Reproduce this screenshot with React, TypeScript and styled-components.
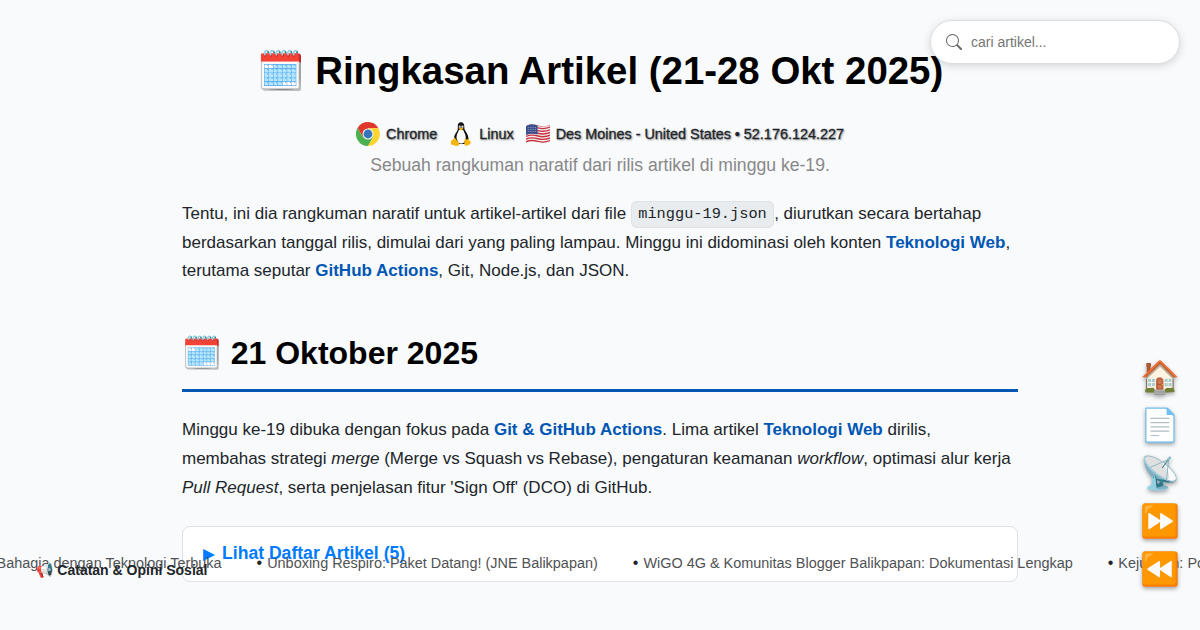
import React from "react";
import styled, { createGlobalStyle } from "styled-components";

const sans = `"Liberation Sans", Arial, "Noto Color Emoji", sans-serif`;

const GlobalStyle = createGlobalStyle`
  * { box-sizing: border-box; }
  html, body { margin: 0; height: 630px; overflow: hidden; }
  body {
    background: #f8fafc;
    color: #212529;
    font-family: ${sans};
    font-size: 17px;
    line-height: 28.8px;
  }
`;

const Page = styled.div`
  position: relative;
  width: 1200px;
  height: 630px;
  overflow: hidden;
`;

const Main = styled.main`
  width: 836px;
  margin: 0 auto;
  padding-top: 40px;
`;

const Header = styled.header`
  display: flex;
  flex-direction: column;
  align-items: center;
`;

const Title = styled.h1`
  margin: 0;
  font-size: 38.4px;
  line-height: 62px;
  color: #000;
  white-space: nowrap;
`;

const TitleIcon = styled.span`
  margin: 0 -1px 0 1px;
`;

const Visitor = styled.div`
  display: flex;
  align-items: center;
  gap: 12px;
  height: 32px;
  margin-top: 16px;
  font-size: 14.4px;
  color: #212529;
  white-space: nowrap;
  text-shadow: 1px 1px 2px rgba(0, 0, 0, 0.5);
`;

const VisitorItem = styled.span`
  display: flex;
  align-items: center;
  gap: 6px;
  -webkit-text-stroke: 0.3px currentColor;
`;

const Subtitle = styled.p`
  margin: 0;
  font-size: 17.6px;
  line-height: 30px;
  color: #888;
`;

const Paragraph = styled.p<{ $top: number }>`
  margin: ${(p) => p.$top}px 0 0;
`;

const Strong = styled.strong`
  color: #0056b3;
`;

const Code = styled.code`
  padding: 3px 6.4px 4.6px;
  border: 1px solid #dee2e6;
  border-radius: 6px;
  background: #e9ecef;
  font-family: "Liberation Mono", monospace;
  font-size: 15.3px;
  line-height: 1;
  vertical-align: 1.2px;
`;

const Heading = styled.h2`
  margin: 40px 0 0;
  padding-bottom: 9px;
  border-bottom: 3px solid #0056b3;
  font-size: 32px;
  line-height: 54px;
  color: #000;
`;

const Details = styled.section`
  height: 56px;
  margin-top: 23.2px;
  padding: 12px 20px;
  border: 1px solid #dee2e6;
  border-radius: 8px;
  background: #fff;
`;

const Summary = styled.div`
  display: flex;
  align-items: flex-start;
  gap: 7px;
  color: #007bff;
  font-size: 17.6px;
  font-weight: bold;
`;

const Marker = styled.span`
  width: 12px;
  padding-top: 1px;
  font-family: "DejaVu Sans", sans-serif;
  font-size: 15.5px;
  font-weight: normal;
`;

const SearchBox = styled.label`
  position: absolute;
  top: 20px;
  right: 20px;
  display: flex;
  align-items: center;
  gap: 9px;
  width: 250px;
  height: 44px;
  padding: 0 15px;
  border: 1px solid #dcdfe2;
  border-radius: 22px;
  background: #fff;
  box-shadow: 0 2px 8px rgba(0, 0, 0, 0.15);
  svg { flex: none; }
`;

const SearchInput = styled.input`
  width: 100%;
  padding: 0;
  border: 0;
  outline: 0;
  background: transparent;
  font: 14px ${sans};
  &::placeholder { color: #757575; }
`;

const SideNav = styled.nav`
  position: absolute;
  top: 353px;
  right: 20px;
  display: flex;
  flex-direction: column;
`;

const SideButton = styled.a`
  display: flex;
  align-items: center;
  justify-content: center;
  width: 40px;
  height: 48px;
  font-size: 32px;
  line-height: 48px;
  filter: drop-shadow(0 2px 2px rgba(0, 0, 0, 0.35));
`;

const Ticker = styled.div`
  position: absolute;
  left: -3.5px;
  top: 549px;
  display: flex;
  gap: 35px;
  font-size: 14.44px;
  line-height: 28px;
  color: #505254;
  white-space: nowrap;
`;

const TickerItem = styled.span`
  display: flex;
  gap: 5px;
`;

const Bullet = styled.span`
  color: #212529;
  font-size: 16px;
`;

const Category = styled.div`
  position: absolute;
  left: 36px;
  top: 556px;
  font-size: 14px;
  font-weight: bold;
  line-height: 28px;
  white-space: nowrap;
`;

const ChromeLogo = () => (
  <svg width="24" height="24" viewBox="0 0 48 48">
    <path d="M3.2 12A24 24 0 0 1 44.8 12.500H24V24L13.600 30Z" fill="#e0382c" />
    <path d="M3.2 12 13.600 30 24 24 34.400 30 24 48A24 24 0 0 1 3.200 12Z" fill="#4caf50" />
    <path d="M44.8 12.500H24V24L34.400 30 24 48A24 24 0 0 0 44.800 12.500Z" fill="#fdd32e" />
    <circle cx="24" cy="24" r="11" fill="#f1f1f1" />
    <circle cx="24" cy="24" r="8.8" fill="#3474b8" />
  </svg>
);

const LinuxLogo = () => (
  <svg width="24" height="24" viewBox="0 0 24 24">
    <path d="M12 .2C9.6.2 8.6 2 8.8 4.4c.1 2.200.2 3.200-1 5C6.200 11.500 5 14 5 16.500L8 22h8l3.500-5c0-3-1.200-5.500-2.700-7.600C15.400 7.500 15.300 6.600 15.300 4.500 15.300 1.800 14.200.2 12 .2Z" fill="#111" />
    <path d="M10 8c-1.500 3-2.800 5.500-2.400 8.500L9.500 21c2 .8 4.200.6 5.800-.8l1.500-4.200c0-3-1.500-5.500-2.600-8Z" fill="#fff" />
    <ellipse cx="10.700" cy="4.800" rx="1" ry="1.400" fill="#fff" />
    <ellipse cx="13.400" cy="4.800" rx="1.100" ry="1.400" fill="#fff" />
    <circle cx="10.900" cy="5" r=".5" />
    <circle cx="13.200" cy="5" r=".5" />
    <path d="M9.500 6.800 12 5.600l2.600 1.200L12 8.500Z" fill="#f5b70c" />
    <path d="M5.600 15.400 10.300 21.400c0 2.600-2.600 3-4.500 2L2.300 22.600C1.400 21.700 2.200 20.500 2 18.700c1.800-.3 2.200-2.300 3.600-3.300Z" fill="#f5b70c" />
    <path d="M16 16.400c.8 1.400 2.400 1.400 3.600.2.500 1.900 1.300 2.900 2.700 3.900-1.500 1.500-3 3.200-5 3.300-2.500 0-2.300-4.400-1.300-7.400Z" fill="#f5b70c" />
  </svg>
);

const UsFlag = () => (
  <svg width="24" height="20" viewBox="0 0 26 20" preserveAspectRatio="none">
    <defs>
      <clipPath id="wave">
        <path d="M0 2.200C5-.2 9 .6 13 1.600s8 1.200 13-.8v17c-4.500 2-9 1.800-13 .8S5 17.200 0 19.400Z" />
      </clipPath>
    </defs>
    <g clipPath="url(#wave)">
      <rect width="26" height="20" fill="#f3eff0" />
      {[0, 1, 2, 3, 4, 5, 6].map((i) => (
        <path
          key={i}
          d={`M0 ${1.6 + i * 2.7}C5 ${-0.6 + i * 2.7} 9 ${0.2 + i * 2.7} 13 ${1.2 + i * 2.7}S21 ${2.4 + i * 2.7} 26 ${0.4 + i * 2.7}`}
          fill="none"
          stroke="#c8313e"
          strokeWidth="1.400"
        />
      ))}
      <path d="M0 0h12.500v10.600C9 9.500 5 9 0 11Z" fill="#3c4f8c" />
      <path d="M2 3.500h10M2 5.500h10M2 7.500h10" stroke="#c9cfe2" strokeWidth=".7" strokeDasharray=".8 1.200" />
    </g>
  </svg>
);

const SearchIcon = () => (
  <svg width="16" height="16" viewBox="0 0 16 16" fill="#666">
    <path d="M11.742 10.344a6.500 6.500 0 1 0-1.397 1.398h-.001q.044.060.098.115l3.850 3.850a1 1 0 0 0 1.415-1.414l-3.850-3.850a1 1 0 0 0-.115-.100zM12 6.500a5.500 5.500 0 1 1-11 0 5.500 5.500 0 0 1 11 0" />
  </svg>
);

const sideLinks = ["🏠", "📄", "📡", "⏩", "⏪"];

const headlines = [
  "Unboxing Respiro: Paket Datang! (JNE Balikpapan)",
  "WiGO 4G & Komunitas Blogger Balikpapan: Dokumentasi Lengkap",
  "Kejujuran: Pojok Balikpapan",
];

export default function App() {
  return (
    <Page>
      <GlobalStyle />
      <Main>
        <Header>
          <Title><TitleIcon>🗓️</TitleIcon> Ringkasan Artikel (21-28 Okt 2025)</Title>
          <Visitor>
            <VisitorItem><ChromeLogo />Chrome</VisitorItem>
            <VisitorItem><LinuxLogo />Linux</VisitorItem>
            <VisitorItem><UsFlag />Des Moines - United States • 52.176.124.227</VisitorItem>
          </Visitor>
          <Subtitle>Sebuah rangkuman naratif dari rilis artikel di minggu ke-19.</Subtitle>
        </Header>
        <Paragraph $top={19.8}>
          Tentu, ini dia rangkuman naratif untuk artikel-artikel dari file <Code>minggu-19.json</Code>, diurutkan secara
          bertahap berdasarkan tanggal rilis, dimulai dari yang paling lampau. Minggu ini didominasi oleh konten{" "}
          <Strong>Teknologi Web</Strong>, terutama seputar <Strong>GitHub Actions</Strong>, Git, Node.js, dan JSON.
        </Paragraph>
        <Heading>🗓️ 21 Oktober 2025</Heading>
        <Paragraph $top={24}>
          Minggu ke-19 dibuka dengan fokus pada <Strong>Git &amp; GitHub Actions</Strong>. Lima artikel{" "}
          <Strong>Teknologi Web</Strong> dirilis, membahas strategi <em>merge</em> (Merge vs Squash vs Rebase),
          pengaturan keamanan <em>workflow</em>, optimasi alur kerja <em>Pull Request</em>, serta penjelasan fitur
          'Sign Off' (DCO) di GitHub.
        </Paragraph>
        <Details>
          <Summary><Marker>{"▶\uFE0E"}</Marker>Lihat Daftar Artikel (5)</Summary>
        </Details>
      </Main>
      <Ticker>
        <span>Bahagia dengan Teknologi Terbuka</span>
        {headlines.map((text) => (
          <TickerItem key={text}><Bullet>•</Bullet>{text}</TickerItem>
        ))}
      </Ticker>
      <Category>📢 Catatan &amp; Opini Sosial</Category>
      <SideNav>
        {sideLinks.map((icon) => (
          <SideButton key={icon}>{icon}</SideButton>
        ))}
      </SideNav>
      <SearchBox>
        <SearchIcon />
        <SearchInput placeholder="cari artikel..." />
      </SearchBox>
    </Page>
  );
}
